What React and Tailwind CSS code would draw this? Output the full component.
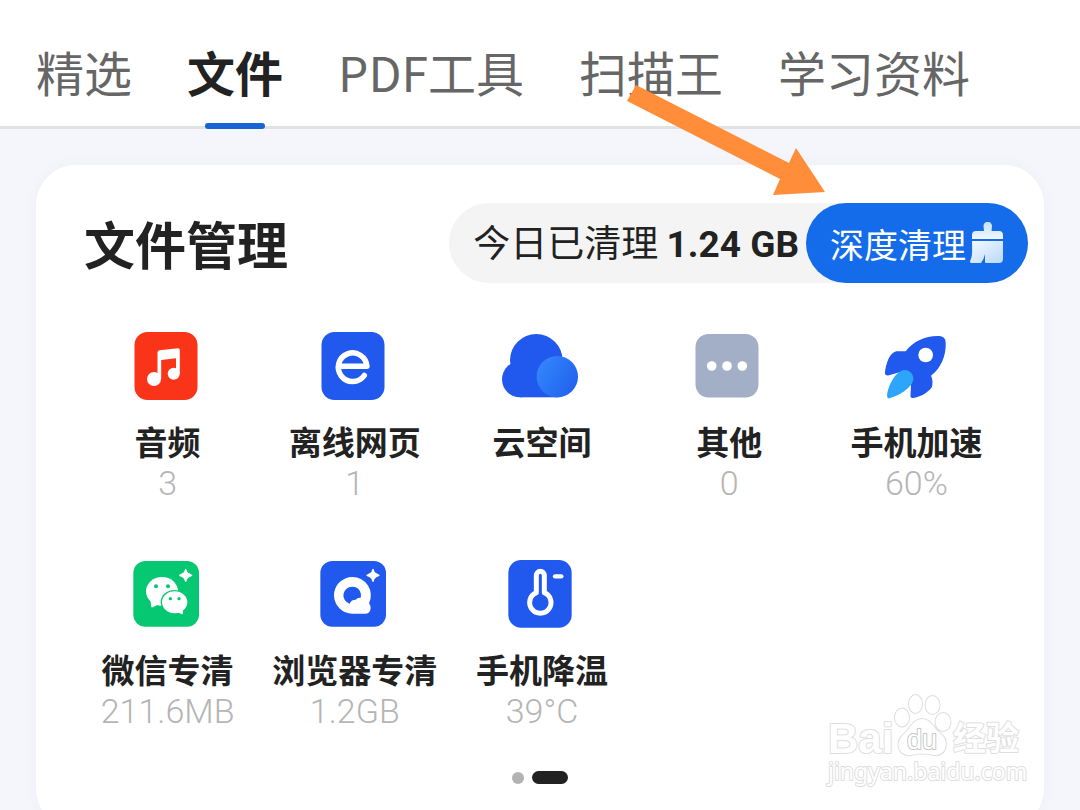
import { useState } from "react";

const tabs = ["精选", "文件", "PDF工具", "扫描王", "学习资料"];

const Sparkle = ({ x, y }) => (
  <path
    transform={`translate(${x} ${y})`}
    d="M0 -18Q3 -7 7 -6Q9 -4 18 0Q9 4 7 6Q3 7 0 18Q-3 7 -7 6Q-9 4 -18 0Q-9 -4 -7 -6Q-3 -7 0 -18Z"
    fill="#fff"
    stroke="#fff"
    strokeWidth="4"
    strokeLinejoin="round"
  />
);

const AudioIcon = () => (
  <svg viewBox="0 0 80 72" className="h-[72px] w-20">
    <rect x="8.5" y="2" width="63" height="68" rx="13" fill="#f93418" />
    <g fill="#fff">
      <circle cx="28" cy="49" r="7" />
      <circle cx="47.7" cy="43.7" r="6" />
      <path d="M31.5 49V22.5Q31.5 20.5 33.5 20.3L51.7 18.2Q53.8 18 53.8 20V44H50V28.2L35.2 30V49Z" />
    </g>
  </svg>
);

const WebIcon = () => (
  <svg viewBox="0 0 80 72" className="h-[72px] w-20">
    <rect x="8.5" y="2" width="63" height="68" rx="13" fill="#2159ef" />
    <path
      d="M26 36.3H53.9A14.3 14.3 0 1 0 51.3 45.5"
      fill="none"
      stroke="#fff"
      strokeWidth="5.5"
      strokeLinecap="round"
      strokeLinejoin="round"
    />
  </svg>
);

const CloudIcon = () => (
  <svg viewBox="0 0 80 72" className="h-[72px] w-20">
    <defs>
      <linearGradient id="cloud" x1="0" y1="0.2" x2="1" y2="0.8">
        <stop offset="0" stopColor="#3387fc" />
        <stop offset="1" stopColor="#2160ee" />
      </linearGradient>
    </defs>
    <g fill="#2159ef">
      <circle cx="36.3" cy="30.3" r="26.3" />
      <circle cx="20" cy="49.3" r="18" />
      <rect x="20" y="40" width="37" height="27.3" />
    </g>
    <circle cx="57.3" cy="46.7" r="20.7" fill="url(#cloud)" />
  </svg>
);

const OtherIcon = () => (
  <svg viewBox="0 0 80 72" className="h-[72px] w-20">
    <rect x="8.5" y="4" width="63" height="63.5" rx="13" fill="#a3afc6" />
    <g fill="#fff">
      <circle cx="24.7" cy="36" r="4.8" />
      <circle cx="40" cy="36" r="4.8" />
      <circle cx="55.3" cy="36" r="4.8" />
    </g>
  </svg>
);

const RocketIcon = () => (
  <svg viewBox="105 30 240 216" className="h-[72px] w-20">
    <path
      d="M138 156C142 128 152 98 172 94Q186 93 200 94C224 62 262 46 302 48Q320 50 320 68C322 106 305 146 276 167Q283 180 279 200C268 218 245 230 222 234Q214 235 214 226L216 160L192 154L150 166Q136 168 138 156Z"
      fill="#2159ef"
    />
    <path d="M216 192L190 220L213 232Z" fill="#fff" />
    <path
      d="M145 232Q143 226 146 214C152 190 168 160 190 151C208 146 224 160 223 178C221 200 185 226 152 235Q146 236 145 232Z"
      fill="#2ca5fb"
    />
    <circle cx="260" cy="105" r="22" fill="#fff" />
  </svg>
);

const WechatIcon = () => (
  <svg viewBox="108 24 240 216" className="h-[72px] w-20">
    <rect x="130" y="33" width="197" height="197" rx="36" fill="#07c872" />
    <ellipse cx="216" cy="124" rx="48" ry="43" fill="#fff" />
    <path d="M181 148L184 171Q185 173 188 172L208 162Z" fill="#fff" />
    <circle cx="198" cy="109" r="6" fill="#07c872" />
    <circle cx="234" cy="109" r="6" fill="#07c872" />
    <ellipse cx="253" cy="156" rx="41" ry="36" fill="#07c872" />
    <ellipse cx="254" cy="157" rx="38" ry="33" fill="#fff" />
    <path d="M262 187L276 193Q279 193 279 190L278 178Z" fill="#fff" />
    <circle cx="241" cy="146" r="5" fill="#07c872" />
    <circle cx="267" cy="146" r="5" fill="#07c872" />
    <Sparkle x={287} y={76} />
  </svg>
);

const BrowserIcon = () => (
  <svg viewBox="669 24 240 216" className="h-[72px] w-20">
    <rect x="691" y="33" width="197" height="197" rx="36" fill="#2159ef" />
    <path
      d="M787 81A55 55 0 0 1 837 160Q844 168 841 180Q838 191 826 191H787A55 55 0 0 1 787 81Z"
      fill="#fff"
    />
    <path
      d="M787 110A26 26 0 0 1 812 143Q802 142 797 149Q783 149 779 161A26 26 0 0 1 787 110Z"
      fill="#2159ef"
    />
    <Sparkle x={849} y={76} />
  </svg>
);

const ThermometerIcon = () => (
  <svg viewBox="120 24 240 216" className="h-[72px] w-20">
    <rect x="145" y="30" width="190" height="203" rx="38" fill="#2159ef" />
    <g fill="none" stroke="#fff" strokeLinecap="round">
      <path
        d="M229 128V76A12 12 0 0 1 253 76V128A32 32 0 1 1 229 128Z"
        strokeWidth="15"
        strokeLinejoin="round"
      />
      <path d="M285 79H304" strokeWidth="13" />
    </g>
  </svg>
);

const BrushIcon = () => (
  <svg viewBox="0 0 34 42" className="h-[42px] w-[34px]">
    <defs>
      <linearGradient id="brush-top" x1="0" y1="0" x2="0" y2="1">
        <stop offset="0" stopColor="#c3e0fd" />
        <stop offset="1" stopColor="#f0f8ff" />
      </linearGradient>
      <linearGradient id="brush-bottom" x1="0" y1="0" x2="1" y2="1">
        <stop offset="0" stopColor="#f4faff" />
        <stop offset="1" stopColor="#b9d9fb" />
      </linearGradient>
    </defs>
    <path
      d="M14 9L13.5 4A4.2 4.2 0 0 1 22 4L21.5 9H29Q33 9 33 13V17H2V13Q2 9 6 9Z"
      fill="url(#brush-top)"
    />
    <path
      d="M2 19H33V37Q33 41 29 41H16Q15 41 15 40V32Q14 37 11 41H1Q0 41 0 39C3 34 2 27 2 19Z"
      fill="url(#brush-bottom)"
    />
  </svg>
);

const items = [
  { name: "音频", value: "3", Icon: AudioIcon },
  { name: "离线网页", value: "1", Icon: WebIcon },
  { name: "云空间", value: "", Icon: CloudIcon },
  { name: "其他", value: "0", Icon: OtherIcon },
  { name: "手机加速", value: "60%", Icon: RocketIcon },
  { name: "微信专清", value: "211.6MB", Icon: WechatIcon },
  { name: "浏览器专清", value: "1.2GB", Icon: BrowserIcon },
  { name: "手机降温", value: "39°C", Icon: ThermometerIcon },
];

const Watermark = () => (
  <svg
    viewBox="0 0 210 100"
    className="pointer-events-none absolute right-[14px] bottom-10 h-[100px] w-[210px]"
  >
    <g
      fill="#fff"
      stroke="#dedede"
      strokeWidth="2"
      strokeLinejoin="round"
      style={{ paintOrder: "stroke" }}
    >
      <text x="8" y="64" fontSize="42" fontWeight="700" fontFamily="Liberation Sans, sans-serif">
        Bai
      </text>
      <text x="133" y="61" fontSize="33" fontWeight="700" fontFamily="Noto Sans CJK SC, sans-serif">
        经验
      </text>
      <text x="8" y="91" fontSize="23" fontFamily="Noto Sans, sans-serif">
        jingyan.baidu.com
      </text>
      <g strokeWidth="2">
        <ellipse cx="95.5" cy="15" rx="6.5" ry="9" />
        <ellipse cx="112.5" cy="16" rx="7" ry="9" />
        <ellipse cx="82" cy="28.5" rx="7" ry="9" />
        <ellipse cx="123" cy="33" rx="7.5" ry="9" />
        <path d="M102 30C111 30 113 39 121 45C130 53 126 67 114 66Q102 63 91 66C78 67 75 54 83 46C90 40 93 30 102 30Z" />
      </g>
      <text x="87" y="60" fontSize="27" stroke="#c8c8c8" fontFamily="Liberation Sans, sans-serif">
        du
      </text>
    </g>
  </svg>
);

const App = () => {
  const [activeTab, setActiveTab] = useState("文件");

  return (
    <div className="relative h-screen overflow-hidden bg-[#f4f6fb] font-['Noto_Sans_CJK_SC',sans-serif] text-[#222]">
      {/* Tabs */}
      <nav className="flex h-[129px] gap-[55px] border-b-[3px] border-[#e1e2e4] bg-white pl-9 text-[48px] whitespace-nowrap">
        {tabs.map((tab) => (
          <button
            key={tab}
            onClick={() => setActiveTab(tab)}
            className={`relative pt-4 leading-[66px] ${
              activeTab === tab ? "font-bold text-[#222]" : "text-[#666]"
            }`}
          >
            {tab}
            {activeTab === tab && (
              <span className="absolute -bottom-[3px] left-1/2 h-[6px] w-[60px] -translate-x-1/2 rounded-full bg-[#1864d2]" />
            )}
          </button>
        ))}
      </nav>

      {/* File management */}
      <main className="px-9 pt-9">
        <section className="relative rounded-[40px] bg-white pt-[38px] pb-[45px] shadow-[0_0_16px_rgba(0,0,0,0.03)]">
          <div className="flex items-center justify-between pr-4 pl-12">
            <h1 className="text-[51px] leading-[76px] font-bold">文件管理</h1>
            <div className="flex h-20 items-center rounded-full bg-[#f4f4f4] pl-6 whitespace-nowrap">
              <p className="mr-[7px] text-[37px]">
                今日已清理 <b className="font-[Roboto,sans-serif]">1.24 GB</b>
              </p>
              <button className="flex h-20 items-center gap-1 rounded-full bg-[#146ceb] px-6 text-[34px] text-white">
                深度清理
                <BrushIcon />
              </button>
            </div>
          </div>

          <div className="mt-[47px] grid grid-cols-5 gap-y-[54px] px-9">
            {items.map(({ name, value, Icon }) => (
              <button key={name} className="flex flex-col items-center whitespace-nowrap">
                <Icon />
                <span className="mt-[18px] pl-1 text-[33px] leading-[42px] font-bold">{name}</span>
                <span className="h-[42px] pl-1 font-[Roboto,sans-serif] text-[34px] leading-[42px] font-light text-[#b5b5b5]">
                  {value}
                </span>
              </button>
            ))}
          </div>

          <div className="mt-[39px] flex items-center justify-center gap-2">
            <span className="h-3 w-3 rounded-full bg-[#b3b3b3]" />
            <span className="h-[13px] w-9 rounded-full bg-[#222]" />
          </div>

          <Watermark />
        </section>
      </main>

      {/* Pointer to the deep clean button */}
      <svg
        viewBox="0 0 198 110"
        className="pointer-events-none absolute top-[85px] right-[255px] h-[110px] w-[198px]"
      >
        <path d="M9 0L0 16L153 94L146 110L198 107L169 63L162 78Z" fill="#ff8d3a" />
      </svg>
    </div>
  );
};

export default App;
